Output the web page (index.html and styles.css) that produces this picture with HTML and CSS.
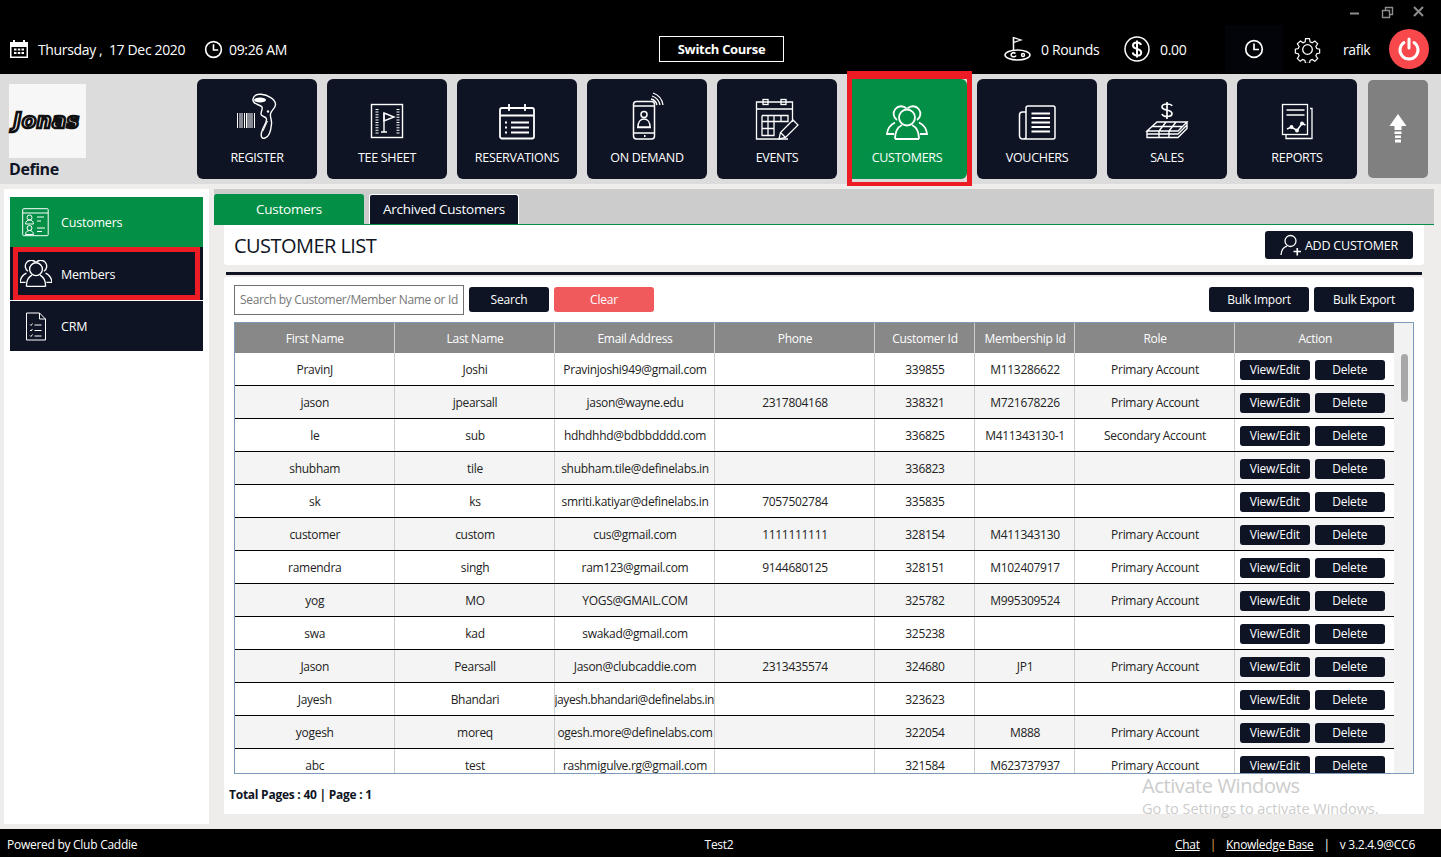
FILE: index.html
```html
<!DOCTYPE html>
<html lang="en">
<head>
<meta charset="utf-8">
<title>Customer List</title>
<link rel="stylesheet" href="styles.css">
</head>
<body>
<div class="app">
<header class="topbar">
  <div class="winctl">
    <svg width="80" height="14" viewBox="0 0 80 14" fill="none" stroke="#8c8c8c"><path d="M3 8.5h9" stroke-width="2"/><path d="M35.5 5.5h7v7h-7zM38.5 5.5v-3h7v7h-3" stroke-width="1.4"/><path d="M67 2l9 9M76 2l-9 9" stroke-width="2"/></svg>
  </div>
  <div class="top-left">
    <svg class="ic-cal" width="20" height="20" viewBox="0 0 20 20" fill="#fff"><path d="M1 3h3V1h2v2h8V1h2v2h3v16H1zM2.5 8v9.500h15V8z"/><path d="M5 9.500h2.500v2H5zM8.800 9.500h2.500v2H8.800zM12.500 9.500H15v2h-2.500zM5 13h2.500v2H5zM8.800 13h2.500v2H8.800zM12.500 13H15v2h-2.500z"/></svg>
    <span class="t-date">Thursday ,&nbsp; 17 Dec 2020</span>
    <svg class="ic-clock" width="19" height="19" viewBox="0 0 20 20" fill="none" stroke="#fff" stroke-width="1.700"><circle cx="10" cy="10" r="8.300"/><path d="M10 4.500V10.500h5"/></svg>
    <span class="t-time">09:26 AM</span>
  </div>
  <button class="switch">Switch Course</button>
  <div class="top-right">
    <svg class="ic-golf" width="28" height="28" viewBox="0 0 28 28" fill="none" stroke="#fff" stroke-width="1.500"><ellipse cx="13.500" cy="20" rx="12.500" ry="5"/><path d="M9.500 15V2"/><path d="M9.500 2.500l7.500 2.500-7.500 2.500z" stroke-width="1.200"/><path d="M12 20.500a2.500 2 0 1 1-.5-2" /><circle cx="19" cy="20" r="1.500"/></svg>
    <span class="t-rounds">0 Rounds</span>
    <svg class="ic-dollar" width="26" height="26" viewBox="0 0 26 26" fill="none" stroke="#fff" stroke-width="1.500"><circle cx="13" cy="13" r="12"/><path d="M17 9c-.5-1.800-2-2.600-4-2.600-2.300 0-4 1.200-4 3.200 0 4.600 8.200 2.200 8.200 6.800 0 2-1.800 3.200-4.200 3.200-2.200 0-3.800-1-4.300-3M13 4.500v17" stroke-width="2"/></svg>
    <span class="t-amount">0.00</span>
    <div class="clock-box">
      <svg width="20" height="20" viewBox="0 0 20 20" fill="none" stroke="#fff" stroke-width="1.700"><circle cx="10" cy="10" r="8.300"/><path d="M10 4.500V10.500h5"/></svg>
    </div>
    <svg class="ic-gear" width="27" height="27" viewBox="0 0 27 27" fill="none" stroke="#fff" stroke-width="1.300"><circle cx="13.500" cy="13.500" r="4.800"/><path d="M11.300 1.500h4.400l.7 3.500 2.300 1 3-2 3.100 3.100-2 3 1 2.300 3.200.7v4.400l-3.200.7-1 2.300 2 3-3.100 3.100-3-2-2.300 1-.7 3.200h-4.400l-.7-3.200-2.300-1-3 2-3.100-3.100 2-3-1-2.300-3.200-.7v-4.400l3.200-.7 1-2.300-2-3L5.600 4l3 2 2.300-1z" transform="translate(1.350 1.350) scale(.9)"/></svg>
    <span class="t-user">rafik</span>
    <div class="power">
      <svg width="24" height="24" viewBox="0 0 24 24" fill="none" stroke="#fff" stroke-width="3" stroke-linecap="round"><path d="M7 5.500a9 9 0 1 0 10 0"/><path d="M12 2v9"/></svg>
    </div>
  </div>
</header>

<nav class="navstrip">
  <div class="brand">
    <div class="logo"><span class="logo-text">Jonas</span></div>
    <div class="brand-name">Define</div>
  </div>
  <div class="tiles">
    <a class="tile">
      <svg class="tile-ic" viewBox="0 0 50 50" fill="none" stroke="#fff" stroke-width="1.400"><path d="M5.500 23v15M8 23v15M10 23v15M12.500 23v15M14.500 23v15M16 23v15M18 23v15M20 23v15M22.500 23v15" stroke-width="1"/><path d="M21 9C22 5 26 4 29 4.300 36 5 43 9 43.500 14 44 18 39 20 38.500 24 38 28 40 30 39.500 34 39 40 37 47 33 48 29 49.500 28.500 45 30 41 31.500 36 35 33 34.500 29 34 26 29 27 29 24 29 21 31 19 30 17 28 14 20 15 21 9z"/><path d="M35.500 31L31 41" stroke-width="1"/><ellipse cx="28" cy="10" rx="6" ry="2.500" fill="#fff" stroke="none"/><circle cx="36" cy="21.500" r="1.200" fill="#fff" stroke="none"/></svg>
      <span class="tile-label">REGISTER</span>
    </a>
    <a class="tile">
      <svg class="tile-ic" viewBox="0 0 50 50" fill="none" stroke="#fff" stroke-width="1.400"><rect x="9.500" y="14.500" width="31" height="33"/><path d="M15 19v25M36 19v25" stroke-width="3" stroke-dasharray="1 1.600"/><path d="M22 23v19M19 42h6" /><path d="M22 23l10 4-10 4z"/></svg>
      <span class="tile-label">TEE SHEET</span>
    </a>
    <a class="tile">
      <svg class="tile-ic" viewBox="0 0 50 50" fill="none" stroke="#fff" stroke-width="1.800"><rect x="8" y="18" width="34" height="30.500" rx="2"/><path d="M8 25.500h34M17 14v7M33 14v7"/><path d="M13 32.500h2M13 37.500h2M13 42.500h2M19 32.500h18M19 37.500h18M19 42.500h18" stroke-width="2"/></svg>
      <span class="tile-label">RESERVATIONS</span>
    </a>
    <a class="tile">
      <svg class="tile-ic" viewBox="0 0 50 50" fill="none" stroke="#fff" stroke-width="1.500"><rect x="11.500" y="11.500" width="21" height="37.500" rx="3"/><path d="M12 16h20M12 43h20"/><circle cx="22" cy="24.500" r="3"/><path d="M16 37c0-5 2.500-8 6-8s6 3 6 8zM15 37.500h14"/><path d="M22 46h1.500" stroke-width="2"/><path d="M29 9a8 8 0 0 1 6 6M30 6a12 12 0 0 1 8 9M31 3a15 15 0 0 1 10 12" stroke-width="1.300"/></svg>
      <span class="tile-label">ON DEMAND</span>
    </a>
    <a class="tile">
      <svg class="tile-ic" viewBox="0 0 50 50" fill="none" stroke="#fff" stroke-width="1.300"><path d="M36 49H4.500V12h36v20"/><rect x="11" y="9.500" width="5" height="5"/><rect x="29" y="9.500" width="5" height="5"/><path d="M4.500 19h36"/><path d="M10 25.500h26v6H22M10 25.500V45.500h12V25.500M10 31.500h12M10 38.500h12M16 25.500v20M29 25.500v6" /><path d="M27 49l1.500-6.500L41 30l5 5-12.500 12.500zM28.500 42.500l5 5" /></svg>
      <span class="tile-label">EVENTS</span>
    </a>
    <div class="tile-hl">
      <a class="tile tile-active">
        <svg class="tile-ic" viewBox="0 0 50 50" fill="none" stroke="#fff" stroke-width="1.800"><circle cx="25" cy="27.500" r="8"/><path d="M13 49C13 41 16 37 20 35M37 49C37 41 34 37 30 35M13 49H37"/><path d="M15 30A7.500 7.500 0 1 1 24.500 18.500M35 30A7.500 7.500 0 1 0 25.500 18.500"/><path d="M13 32.500C8 35 5.500 39 5 44H12M37 32.500C42 35 44.500 39 45 44H38"/></svg>
        <span class="tile-label">CUSTOMERS</span>
      </a>
    </div>
    <a class="tile">
      <svg class="tile-ic" viewBox="0 0 50 50" fill="none" stroke="#fff" stroke-width="1.500"><path d="M14 47V18a2 2 0 0 1 2-2h25a2 2 0 0 1 2 2v29a2 2 0 0 1-2 2H11c-2 0-3.500-1.500-3.500-3.500V25a3 3 0 0 1 3-3H14M11 49c1.500 0 3-.5 3-2"/><path d="M19.500 23.500h18.500M19.500 28h18.500M19.500 32.500h18.500M19.500 37h18.500M19.500 41.500h18.500" stroke-width="1.800"/></svg>
      <span class="tile-label">VOUCHERS</span>
    </a>
    <a class="tile">
      <svg class="tile-ic" viewBox="0 0 50 50" fill="none" stroke="#fff" stroke-width="1.400"><path d="M30 16c-.5-1.500-2.500-2-5-2-3 0-5 1-5 3 0 4 10 2 10 6.500 0 2-2 3-5 3-2.500 0-4.500-1-5-2.500M25 12v17" stroke-width="1.700"/><path d="M15 32h30l-9 9H5zM24 32l-7 9M34 32l-7 9M10 36.500h30M5 41v3h31l9-9v-3M5 44v3.500h31l9-9V35M17 41v6.500M27 41v6.500"/></svg>
      <span class="tile-label">SALES</span>
    </a>
    <a class="tile">
      <svg class="tile-ic" viewBox="0 0 50 50" fill="none" stroke="#fff" stroke-width="1.300"><rect x="10.500" y="14.500" width="25" height="30"/><path d="M38 18.500h2v30H14v-3.500"/><path d="M14.500 20h18M14.500 25h18" stroke-width="1.500"/><path d="M15 39l4.500-2 5.500 3.500 5-7 3.500 1.500" stroke-width="1.500"/><circle cx="19.500" cy="37" r="1.300" fill="#fff"/><circle cx="25" cy="40.500" r="1.300" fill="#fff"/><circle cx="30" cy="33.500" r="1.300" fill="#fff"/></svg>
      <span class="tile-label">REPORTS</span>
    </a>
  </div>
  <div class="up-tile">
    <svg width="18" height="30" viewBox="0 0 18 30" fill="#fff"><path d="M9 0l8.500 12H12.500v4h-7v-4H.5z"/><path d="M5.500 17.500h7v2.500h-7zM6 21.500h6v2.500H6zM6 25.500h6v3H6z"/></svg>
  </div>
</nav>

<main class="main">
  <aside class="sidebar">
    <a class="side-item side-active">
      <svg width="28" height="29" viewBox="0 0 28 29" fill="none" stroke="#fff" stroke-width="1"><rect x=".7" y=".7" width="25.500" height="27" rx="1"/><path d="M.7 5h25.500"/><circle cx="7.500" cy="9.500" r="2.500"/><path d="M3.500 16c0-2.500 2-4 4-4s4 1.500 4 4z"/><circle cx="7.500" cy="20" r="2.500"/><path d="M3.500 26.500c0-2.500 2-4 4-4s4 1.500 4 4z"/><path d="M15 9h7M15 13h4M15 20h8M15 23.500h5"/></svg>
      <span>Customers</span>
    </a>
    <div class="side-hl">
      <a class="side-item side-dark side-framed">
        <svg width="32" height="28" viewBox="5 17 40 33" fill="none" stroke="#fff" stroke-width="1.700"><circle cx="25" cy="27.500" r="8"/><path d="M13 49C13 41 16 37 20 35M37 49C37 41 34 37 30 35M13 49H37"/><path d="M15 30A7.500 7.500 0 1 1 24.500 18.500M35 30A7.500 7.500 0 1 0 25.500 18.500"/><path d="M13 32.500C8 35 5.500 39 5 44H12M37 32.500C42 35 44.500 39 45 44H38"/></svg>
        <span>Members</span>
      </a>
    </div>
    <a class="side-item side-dark side-crm">
      <svg width="24" height="29" viewBox="0 0 24 29" fill="none" stroke="#fff" stroke-width="1"><path d="M2.500 1h13l6 6v21h-19zM15.500 1v6h6"/><path d="M6 12.500l1 1 1.500-2M6 18l1 1 1.500-2M6 23.500l1 1 1.500-2M10.500 13h7M10.500 18.500h7M10.500 24h7"/></svg>
      <span>CRM</span>
    </a>
  </aside>

  <section class="content">
    <div class="tabbar">
      <a class="tab tab-on">Customers</a>
      <a class="tab tab-off">Archived Customers</a>
    </div>
    <div class="panel-wrap">
      <div class="list-head">
        <h1>CUSTOMER LIST</h1>
        <button class="btn add-btn">
          <svg width="22" height="22" viewBox="0 0 22 22" fill="none" stroke="#fff" stroke-width="1.300"><circle cx="10.500" cy="7" r="5.500"/><path d="M1 21c.3-5 3-8 6-8.800"/><path d="M13.500 17.500h7.500M17.250 14v7.500" stroke-width="1.600"/></svg>
          ADD CUSTOMER
        </button>
      </div>
      <div class="rule"></div>
      <div class="list-body">
        <div class="toolbar">
          <input class="search" type="text" placeholder="Search by Customer/Member Name or Id">
          <button class="btn tool-btn">Search</button>
          <button class="btn tool-btn btn-clear">Clear</button>
          <span class="spacer"></span>
          <button class="btn tool-btn">Bulk Import</button>
          <button class="btn tool-btn">Bulk Export</button>
        </div>
        <div class="table-box">
          <table class="grid">
            <colgroup><col class="c160"><col class="c160"><col class="c160"><col class="c160"><col class="c100"><col class="c100"><col class="c160"><col class="c160"></colgroup>
            <thead><tr><th>First Name</th><th>Last Name</th><th>Email Address</th><th>Phone</th><th>Customer Id</th><th>Membership Id</th><th>Role</th><th>Action</th></tr></thead>
            <tbody>
              <tr><td>PravinJ</td><td>Joshi</td><td>Pravinjoshi949@gmail.com</td><td></td><td>339855</td><td>M113286622</td><td>Primary Account</td><td class="acts"><button class="mini">View/Edit</button><button class="mini">Delete</button></td></tr>
              <tr><td>jason</td><td>jpearsall</td><td>jason@wayne.edu</td><td>2317804168</td><td>338321</td><td>M721678226</td><td>Primary Account</td><td class="acts"><button class="mini">View/Edit</button><button class="mini">Delete</button></td></tr>
              <tr><td>le</td><td>sub</td><td>hdhdhhd@bdbbdddd.com</td><td></td><td>336825</td><td>M411343130-1</td><td>Secondary Account</td><td class="acts"><button class="mini">View/Edit</button><button class="mini">Delete</button></td></tr>
              <tr><td>shubham</td><td>tile</td><td>shubham.tile@definelabs.in</td><td></td><td>336823</td><td></td><td></td><td class="acts"><button class="mini">View/Edit</button><button class="mini">Delete</button></td></tr>
              <tr><td>sk</td><td>ks</td><td>smriti.katiyar@definelabs.in</td><td>7057502784</td><td>335835</td><td></td><td></td><td class="acts"><button class="mini">View/Edit</button><button class="mini">Delete</button></td></tr>
              <tr><td>customer</td><td>custom</td><td>cus@gmail.com</td><td>1111111111</td><td>328154</td><td>M411343130</td><td>Primary Account</td><td class="acts"><button class="mini">View/Edit</button><button class="mini">Delete</button></td></tr>
              <tr><td>ramendra</td><td>singh</td><td>ram123@gmail.com</td><td>9144680125</td><td>328151</td><td>M102407917</td><td>Primary Account</td><td class="acts"><button class="mini">View/Edit</button><button class="mini">Delete</button></td></tr>
              <tr><td>yog</td><td>MO</td><td>YOGS@GMAIL.COM</td><td></td><td>325782</td><td>M995309524</td><td>Primary Account</td><td class="acts"><button class="mini">View/Edit</button><button class="mini">Delete</button></td></tr>
              <tr><td>swa</td><td>kad</td><td>swakad@gmail.com</td><td></td><td>325238</td><td></td><td></td><td class="acts"><button class="mini">View/Edit</button><button class="mini">Delete</button></td></tr>
              <tr><td>Jason</td><td>Pearsall</td><td>Jason@clubcaddie.com</td><td>2313435574</td><td>324680</td><td>JP1</td><td>Primary Account</td><td class="acts"><button class="mini">View/Edit</button><button class="mini">Delete</button></td></tr>
              <tr><td>Jayesh</td><td>Bhandari</td><td class="tight">jayesh.bhandari@definelabs.in</td><td></td><td>323623</td><td></td><td></td><td class="acts"><button class="mini">View/Edit</button><button class="mini">Delete</button></td></tr>
              <tr><td>yogesh</td><td>moreq</td><td>ogesh.more@definelabs.com</td><td></td><td>322054</td><td>M888</td><td>Primary Account</td><td class="acts"><button class="mini">View/Edit</button><button class="mini">Delete</button></td></tr>
              <tr><td>abc</td><td>test</td><td>rashmigulve.rg@gmail.com</td><td></td><td>321584</td><td>M623737937</td><td>Primary Account</td><td class="acts"><button class="mini">View/Edit</button><button class="mini">Delete</button></td></tr>
            </tbody>
          </table>
          <div class="scroll-thumb"></div>
        </div>
        <div class="pages">Total Pages : 40 | Page : 1</div>
      </div>
    </div>
    <div class="activate">
      <div class="act-1">Activate Windows</div>
      <div class="act-2">Go to Settings to activate Windows.</div>
    </div>
  </section>
</main>

<footer class="footer">
  <span class="f-left">Powered by Club Caddie</span>
  <span class="f-mid">Test2</span>
  <span class="f-right"><a>Chat</a><i class="sep sep-y">|</i><a>Knowledge Base</a><i class="sep">|</i><span>v 3.2.4.9@CC6</span></span>
</footer>
</div>
</body>
</html>
```
FILE: styles.css
```css
*, *::before, *::after { box-sizing: border-box; }
html, body { margin: 0; padding: 0; }
body { font-family: "Open Sans", "Noto Sans", sans-serif; font-size: 12px; color: #0e1424; background: #eeedec; overflow: hidden; }
.app { width: 1441px; height: 857px; display: flex; flex-direction: column; position: relative; }

/* top bar */
.topbar { height: 74px; flex: none; background: #000; color: #fff; display: flex; align-items: center; padding: 26px 0 2px 9px; font-size: 14px; letter-spacing: -.35px; position: relative; }
.winctl { position: absolute; top: 5px; right: 14px; line-height: 0; }
.top-left { width: 650px; display: flex; align-items: center; }
.ic-cal { margin-right: 9px; }
.t-date { width: 167px; white-space: nowrap; }
.ic-clock { margin: 0 6px 0 -1px; }
.switch { width: 125px; height: 26px; background: #000; border: 1px solid #fff; color: #fff; font: 700 13px "Open Sans", sans-serif; letter-spacing: -.3px; padding: 0; }
.top-right { display: flex; align-items: center; margin-left: 220px; }
.t-rounds { margin-left: 9px; width: 83px; white-space: nowrap; }
.t-amount { margin-left: 10px; width: 65px; }
.clock-box { width: 58px; height: 48px; background: #02040a; display: flex; align-items: center; justify-content: center; }
.ic-gear { margin-left: 11px; }
.t-user { margin-left: 22px; width: 46px; }
.power { width: 40px; height: 40px; border-radius: 50%; background: #f9484c; display: flex; align-items: center; justify-content: center; }

/* nav strip */
.navstrip { height: 110px; flex: none; background: #dcdcdc; display: flex; position: relative; }
.brand { width: 197px; padding: 10px 0 0 9px; }
.logo { width: 77px; height: 74px; background: #f7f7f7; display: flex; align-items: center; justify-content: center; padding-right: 2px; }
.logo-text { font: italic 700 21px/1 "DejaVu Sans", sans-serif; color: #fff; -webkit-text-stroke: 2.6px #111; letter-spacing: .4px; }
.brand-name { font: 700 16px/20px "Open Sans", sans-serif; letter-spacing: -.45px; color: #0e1424; margin-top: 1px; }
.tiles { display: flex; gap: 10px; padding-top: 5px; align-items: flex-start; }
.tile { width: 120px; height: 100px; background: #0e1424; border-radius: 6px; display: flex; flex-direction: column; align-items: center; padding-top: 11px; color: #fff; flex: none; }
.tile-ic { width: 50px; height: 50px; display: block; }
.tile-label { font-size: 12.500px; line-height: 16px; margin-top: 10px; letter-spacing: -.3px; white-space: nowrap; }
.tile-hl { width: 120px; height: 100px; flex: none; position: relative; }
.tile-hl::after { content: ""; position: absolute; left: 0; top: -8px; width: 125px; height: 115px; border: solid #ed1c24; border-width: 8px 5px 4px; pointer-events: none; }
.tile-active { background: #038f45; }
.up-tile { width: 60px; height: 98px; background: #808080; border-radius: 5px; margin: 6px 0 0 11px; display: flex; align-items: center; justify-content: center; flex: none; }

/* main */
.main { flex: 1; min-height: 0; display: flex; padding: 5px 7px 5px 4px; position: relative; }
.sidebar { width: 205px; flex: none; background: #fff; padding: 8px 6px; display: flex; flex-direction: column; }
.side-item { height: 50px; flex: none; display: grid; grid-template-columns: 51px 1fr; align-items: center; justify-items: start; color: #fff; font-size: 12.500px; letter-spacing: -.2px; }
.side-item svg { justify-self: center; }
.side-active { background: #038f45; }
.side-dark { background: #0e1424; }
.side-hl { height: 53px; flex: none; padding: 0 3px; background: #0e1424; }
.side-framed { height: 53px; border: 5px solid #ed1c24; grid-template-columns: 43px 1fr; }
.side-framed svg { justify-self: start; margin-left: 2px; }
.side-framed span { margin-top: 2px; }
.side-crm { margin-top: 1px; }
.content { margin-left: 5px; width: 1220px; display: flex; flex-direction: column; position: relative; }
.tabbar { height: 36px; background: #ccc; border-bottom: 1px solid #038f45; display: flex; gap: 5px; padding-top: 5px; flex: none; }
.tab { width: 150px; height: 30px; display: flex; align-items: center; justify-content: center; color: #fff; font-size: 13.500px; letter-spacing: -.25px; }
.tab-on { background: #038f45; border-radius: 3px 3px 0 0; }
.tab-off { background: #0e1424; border: 1px solid #fff; border-bottom: 0; border-radius: 3px 3px 0 0; padding-bottom: 2px; }
.panel-wrap { margin-left: 10px; width: 1200px; display: flex; flex-direction: column; flex: 1; min-height: 0; padding-bottom: 10px; }
.list-head { height: 40px; background: #fff; display: flex; align-items: center; justify-content: space-between; padding: 0 11px 0 10px; border-radius: 0 0 3px 3px; flex: none; }
h1 { font-size: 20px; font-weight: 400; margin: 0; letter-spacing: -.55px; color: #0e1424; }
.btn { background: #0e1424; color: #fff; border: 0; border-radius: 3px; font-family: "Open Sans", sans-serif; letter-spacing: -.2px; padding: 0; }
.add-btn { width: 148px; height: 28px; font-size: 12.500px; display: flex; align-items: center; justify-content: center; gap: 3px; }
.rule { height: 3px; background: #0e1424; margin: 7px 2px 2px; flex: none; }
.list-body { background: #fff; flex: 1; padding: 8px 10px 0; border-radius: 3px 3px 0 0; min-height: 0; }
.toolbar { display: flex; align-items: flex-start; gap: 5px; height: 30px; }
.search { width: 230px; height: 30px; border: 1px solid #707070; padding: 0 5px 2px; font: 12px "Open Sans", sans-serif; letter-spacing: -.34px; color: #333; }
.search::placeholder { color: #777; opacity: 1; }
.tool-btn { width: 80px; height: 25px; margin-top: 2px; font-size: 12px; }
.btn-clear { width: 100px; background: #f05a5c; }
.spacer { flex: 1; }
.toolbar .tool-btn:nth-last-child(-n+2) { width: 100px; }
.table-box { margin-top: 7px; width: 1180px; height: 452px; border: 1px solid #7d99bb; overflow: hidden; position: relative; background: #f2f2f2; }
.grid { width: 1160px; margin-left: -1px; border-collapse: collapse; table-layout: fixed; font-size: 12px; letter-spacing: -.3px; background: #fff; }
.c160 { width: 160px; }
.c100 { width: 100px; }
.grid th { height: 30px; background: #888; color: #fff; font-weight: 400; border-left: 1px solid #ccc; padding: 0 0 0 2px; }
.grid th:first-child { border-left: 0; }
.grid td { height: 33px; border-left: 1px solid #ccc; border-bottom: 1px solid #000; padding: 2px 0 0 2px; text-align: center; white-space: nowrap; overflow: hidden; color: #222; }
.grid td:first-child { border-left: 0; }
.grid tbody tr:first-child td { height: 32px; }
.grid tbody tr:nth-child(even) td { background: #f4f4f4; }
.grid td.tight { letter-spacing: -.42px; padding-left: 0; }
.grid td.acts { font-size: 0; padding: 2px 4px 0 0; }
.mini { width: 70px; height: 20px; background: #0e1424; color: #fff; border: 0; border-radius: 3px; font: 12px "Open Sans", sans-serif; letter-spacing: -.2px; padding: 0; margin: 0 2.500px; vertical-align: middle; }
.scroll-thumb { position: absolute; left: 1166px; top: 31px; width: 7px; height: 48px; background: #a8a8a8; border-radius: 4px; }
.pages { font-weight: 700; font-size: 12px; letter-spacing: -.25px; margin: 12px 0 0 -5px; color: #0e1424; }
.activate { position: absolute; left: 928px; top: 584px; color: #ccc; pointer-events: none; white-space: nowrap; }
.act-1 { font-size: 20px; line-height: 26px; letter-spacing: -.4px; }
.act-2 { font-size: 14.500px; line-height: 20px; letter-spacing: -.03px; }

/* footer */
.footer { height: 28px; flex: none; background: #000; color: #fff; display: grid; grid-template-columns: 1fr auto 1fr; align-items: center; padding: 2px 26px 0 7px; font-size: 12px; letter-spacing: -.27px; }
.f-mid { margin-left: 16px; }
.f-right { justify-self: end; display: flex; align-items: center; }
.f-right a { text-decoration: underline; letter-spacing: -.3px; }
.sep { font-style: normal; margin: 0 10px; }
.sep-y { color: #e8b04a; }
```
